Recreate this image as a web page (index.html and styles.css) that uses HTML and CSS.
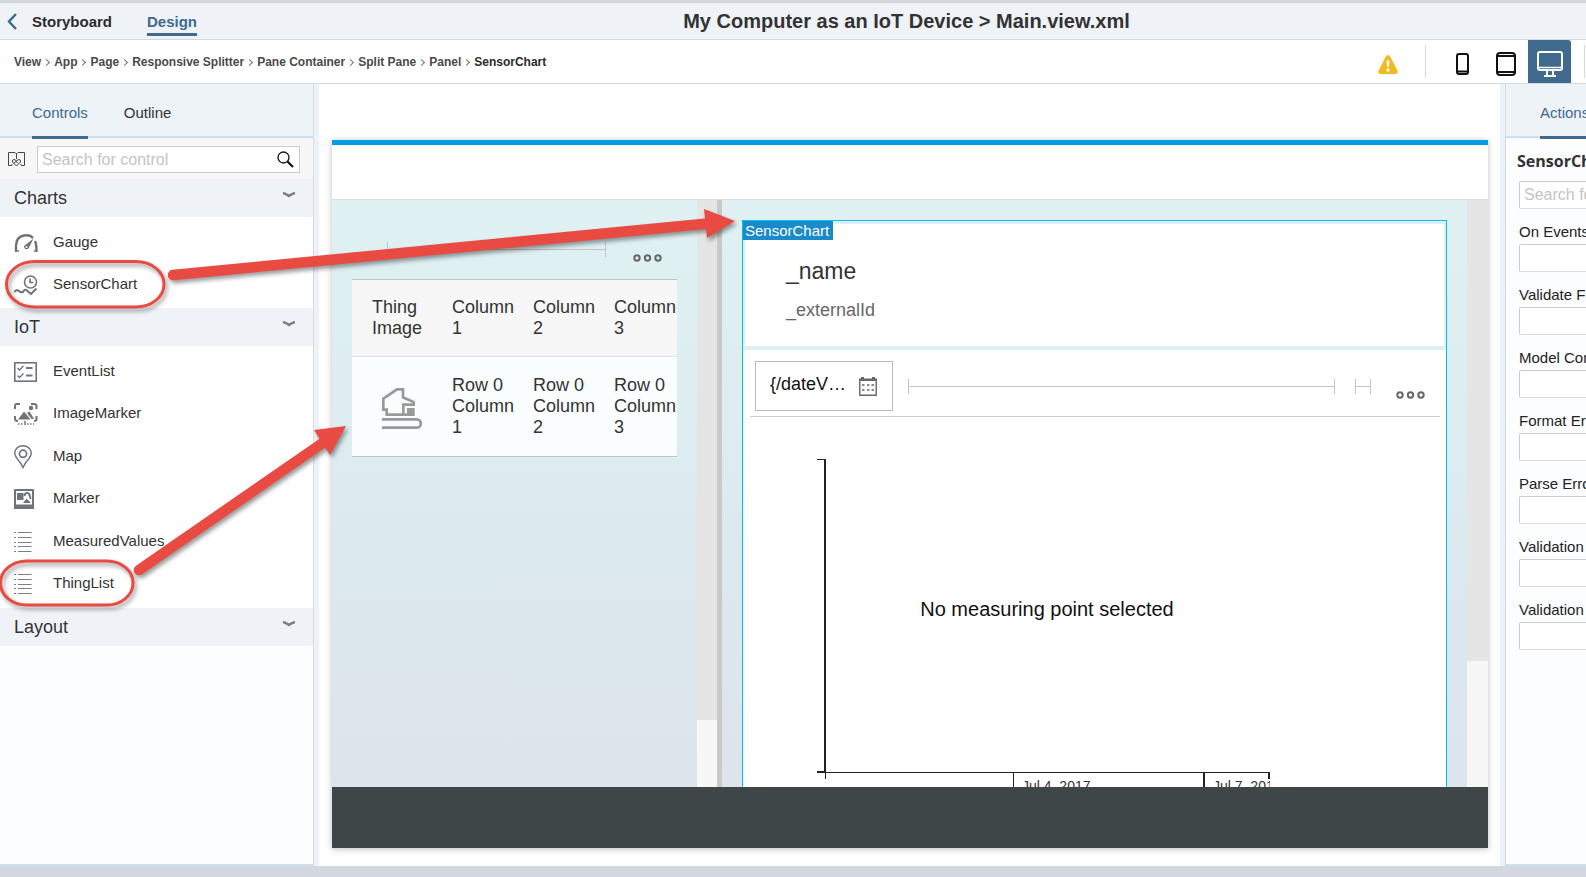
FILE: index.html
```html
<!DOCTYPE html>
<html lang="en">
<head>
<meta charset="utf-8">
<title>My Computer as an IoT Device</title>
<link rel="stylesheet" href="styles.css">
</head>
<body>
<div class="app">
  <header class="topbar">
    <nav class="topnav">
      <a class="back" href="#" aria-label="Back"><svg width="10" height="17" viewBox="0 0 10 17"><path d="M9 1L2 8.500L9 16" fill="none" stroke="#33689a" stroke-width="2.400"/></svg></a>
      <a class="toplink" href="#">Storyboard</a>
      <a class="toplink active" href="#">Design</a>
    </nav>
    <h1 class="title">My Computer as an IoT Device &gt; Main.view.xml</h1>
  </header>

  <div class="toolbar">
    <nav class="crumbs" aria-label="Breadcrumb">
      <a href="#">View</a><a href="#">App</a><a href="#">Page</a><a href="#">Responsive Splitter</a><a href="#">Pane Container</a><a href="#">Split Pane</a><a href="#">Panel</a><a href="#" class="current">SensorChart</a>
    </nav>
    <div class="devices">
      <button class="warn" aria-label="Warnings"><svg width="20" height="19" viewBox="0 0 20 19"><path d="M10 0Q11.500 0 12.500 2L19.500 15.500Q20.500 19 17.500 19H2.500Q-.5 19 .5 15.500L7.500 2Q8.500 0 10 0Z" fill="#f0bb22"/><path d="M8.600 5.500h2.800l-.5 6.500h-1.800z" fill="#fff"/><circle cx="10" cy="15" r="1.700" fill="#fff"/></svg></button>
      <span class="sep"></span>
      <button class="device" aria-label="Phone"><svg width="13" height="22" viewBox="0 0 13 22"><rect x="1" y="1" width="11" height="20" rx="2" fill="none" stroke="#111" stroke-width="2"/><path d="M1 18.500H12" stroke="#111" stroke-width="2"/></svg></button>
      <button class="device" aria-label="Tablet"><svg width="20" height="24" viewBox="0 0 20 24"><rect x="1" y="1" width="18" height="22" rx="3" fill="none" stroke="#111" stroke-width="2"/><path d="M1 4H19M1 20H19" stroke="#111" stroke-width="2"/></svg></button>
      <button class="device selected" aria-label="Desktop"><svg width="26" height="26" viewBox="0 0 26 26"><rect x="1" y="1" width="24" height="18" rx="2" fill="none" stroke="#fff" stroke-width="2"/><path d="M1 16.500H25" stroke="#fff" stroke-width="1.500"/><path d="M10 19.500V24.500M16 19.500V24.500M7 25H19" stroke="#fff" stroke-width="2"/></svg></button>
      <span class="sep"></span>
    </div>
  </div>

  <main class="work">
    <aside class="left">
      <div class="tabs">
        <button class="tab on">Controls</button>
        <button class="tab">Outline</button>
      </div>
      <div class="find">
        <button class="catalog" aria-label="Catalog"><svg width="17" height="15" viewBox="0 0 17 15" fill="none" stroke="#444"><path d="M3 13.500H.5V.5H7L8.500 2L10 .5H16.500V13.500H14M8.500 2V7"/><path d="M8.500 14L4.500 10Q4 7.500 6 7.500T8.500 9.500Q9 7.500 11 7.500T12.500 10Z"/><path d="M6 11L8 9.500L10 11.500M3 14L4.500 12M14 14L12.500 12"/></svg></button>
        <div class="searchbox">
          <input type="text" placeholder="Search for control" aria-label="Search for control">
          <button aria-label="Search"><svg width="17" height="17" viewBox="0 0 17 17"><circle cx="6.500" cy="6.500" r="5.500" fill="none" stroke="#111" stroke-width="1.300"/><path d="M10.500 10.500L16 16" stroke="#111" stroke-width="2.200"/></svg></button>
        </div>
      </div>

      <h2 class="group"><span>Charts</span><svg width="14" height="6" viewBox="0 0 14 6"><path d="M1 1Q4 1.500 7 4Q10 1.500 13 1" fill="none" stroke="#808080" stroke-width="2.400"/></svg></h2>
      <ul class="items">
        <li><svg class="ic" width="24" height="20" viewBox="0 0 24 20"><path d="M2 18.500V13Q2 4 10 2.500Q16 1.500 19 5M21 8Q22.500 11 22.500 18.500" fill="none" stroke="#6e7478" stroke-width="2.400"/><path d="M1 18H5M20 18H23.500" stroke="#6e7478" stroke-width="1.500"/><path d="M19.500 5.500L14.500 15.500Q10.500 18 10 13Z" fill="#6e7478"/><circle cx="12.500" cy="14" r="1" fill="#fff"/></svg><span>Gauge</span></li>
        <li><svg class="ic" width="24" height="20" viewBox="0 0 24 20" fill="none" stroke="#6e7478" stroke-width="1.600"><circle cx="16.500" cy="7" r="6"/><path d="M16 3.500V7.500H19.500"/><path d="M0 17Q3 14 5 16T9 17Q11 13 13.500 16L17 19L22.500 13.500" stroke-width="2"/></svg><span>SensorChart</span></li>
      </ul>

      <h2 class="group"><span>IoT</span><svg width="14" height="6" viewBox="0 0 14 6"><path d="M1 1Q4 1.500 7 4Q10 1.500 13 1" fill="none" stroke="#808080" stroke-width="2.400"/></svg></h2>
      <ul class="items long">
        <li><svg class="ic" width="24" height="20" viewBox="0 0 24 20" fill="none" stroke="#6e7478"><rect x=".8" y=".8" width="21.400" height="18.400" stroke-width="1.600"/><path d="M3.500 6L5.500 8L9.500 4M3.500 13.500L5.500 15.500L9.500 11.500" stroke-width="1.300"/><path d="M12 6H18.500M12 13.500H18.500" stroke-width="2"/></svg><span>EventList</span></li>
        <li><svg class="ic" width="24" height="22" viewBox="0 0 24 22"><path d="M1 6V3Q1 1 3 1H6M17 1H20Q22.500 1 22.500 3V6M1 13V16Q1 18 4 18M22.500 13V16Q22.500 18 20 18" fill="none" stroke="#6e7478" stroke-width="2"/><path d="M4 16.500L10 8.500L16.500 16.500Z" fill="#6e7478"/><path d="M13 10L15.500 8.500L20 16H17.500Z" fill="#6e7478"/><circle cx="17" cy="5" r="2.200" fill="#6e7478"/><path d="M4 21H5.500M7 21H8.500M13 21H14.500M16 21H17.500M19 21H20M11 18V22" stroke="#6e7478" stroke-width="1.500"/></svg><span>ImageMarker</span></li>
        <li><svg class="ic" width="18" height="24" viewBox="0 0 18 24" fill="none" stroke="#6e7478" stroke-width="1.400"><path d="M9 22.500Q7 18 3 13.500Q-.5 9 1.500 5Q4 .8 9 .8T16.500 5Q18.500 9 15 13.500Q11 18 9 22.500Z"/><circle cx="9" cy="8.800" r="3.600" stroke-width="1.700"/></svg><span>Map</span></li>
        <li><svg class="ic" width="20" height="20" viewBox="0 0 20 20"><path d="M0 1Q0 0 1 0H19Q20 0 20 1V20H0ZM2 2V15.500H18V2Z" fill="#6e7478" fill-rule="evenodd"/><path d="M3 4H9.500V11H3ZM9 14L12.500 9.500L17 14Z" fill="#6e7478"/><path d="M10.500 7Q11 3.500 13.500 4T16.500 10" fill="none" stroke="#6e7478" stroke-width="2"/></svg><span>Marker</span></li>
        <li><svg class="ic" width="18" height="20" viewBox="0 0 18 20"><path d="M0 .5H2M0 5.500H2M0 10.500H2M0 14.500H2M0 19.500H2M4 .5H17.500M4 5.500H17.500M4 10.500H17.500M4 14.500H17.500M4 19.500H17.500" stroke="#7b8084"/></svg><span>MeasuredValues</span></li>
        <li><svg class="ic" width="18" height="20" viewBox="0 0 18 20"><path d="M0 .5H2M0 5.500H2M0 10.500H2M0 14.500H2M0 19.500H2M4 .5H17.500M4 5.500H17.500M4 10.500H17.500M4 14.500H17.500M4 19.500H17.500" stroke="#7b8084"/></svg><span>ThingList</span></li>
      </ul>

      <h2 class="group"><span>Layout</span><svg width="14" height="6" viewBox="0 0 14 6"><path d="M1 1Q4 1.500 7 4Q10 1.500 13 1" fill="none" stroke="#808080" stroke-width="2.400"/></svg></h2>
    </aside>

    <section class="canvas">
      <div class="stage">
        <div class="stagehead"></div>
        <div class="split">
          <div class="pane first">
            <div class="content">
              <div class="listbar">
                <span class="range"></span>
                <button class="more" aria-label="More"><svg width="30" height="8" viewBox="0 0 30 8" fill="none" stroke="#666" stroke-width="2"><circle cx="4" cy="4" r="2.700"/><circle cx="14.500" cy="4" r="2.700"/><circle cx="25" cy="4" r="2.700"/></svg></button>
              </div>
              <table class="things">
                <thead><tr><th>Thing Image</th><th>Column 1</th><th>Column 2</th><th>Column 3</th></tr></thead>
                <tbody><tr>
                  <td class="pic"><svg width="41" height="42" viewBox="0 0 123 126" fill="none" stroke="#999" stroke-width="8"><path d="M4 32L45 4H63V28L95 42V50H64V80H14V65H4Z"/><path d="M64 80H98"/><rect x="75" y="60" width="23" height="22" fill="#999" stroke="none"/><path d="M0 94H104A12.500 12.500 0 0 1 104 119H0"/></svg></td>
                  <td>Row 0 Column 1</td><td>Row 0 Column 2</td><td>Row 0 Column 3</td>
                </tr></tbody>
              </table>
            </div>
            <div class="scroll"><span class="track short"></span></div>
          </div>
          <div class="divider"></div>
          <div class="pane second">
            <div class="content wide">
              <article class="sensor">
                <span class="tag">SensorChart</span>
                <header class="thinghead">
                  <h3>_name</h3>
                  <p>_externalId</p>
                </header>
                <div class="chartbar">
                  <button class="date"><span>{/dateV…</span><svg width="18" height="19" viewBox="0 0 18 19"><path d="M.8 2V18.200H17.200V2" fill="none" stroke="#666" stroke-width="1.400"/><path d="M0 1.500H2V0H5V1.500H13V0H16V1.500H18V4H0Z" fill="#666"/><path d="M3 8H5.500M8 8H10.500M12.500 8H15M3 13H5.500M8 13H10.500M12.500 13H15" stroke="#666" stroke-width="1.600"/></svg></button>
                  <span class="range"></span>
                  <span class="range mini"></span>
                  <button class="more" aria-label="More"><svg width="30" height="8" viewBox="0 0 30 8" fill="none" stroke="#666" stroke-width="2"><circle cx="4" cy="4" r="2.700"/><circle cx="14.500" cy="4" r="2.700"/><circle cx="25" cy="4" r="2.700"/></svg></button>
                </div>
                <svg class="chart" width="453" height="340" viewBox="0 0 453 340">
                  <path d="M0 .5H9" stroke="#222"/>
                  <path d="M0 313H9" stroke="#222" stroke-width="2"/>
                  <path d="M8 0V314" stroke="#222" stroke-width="2"/>
                  <path d="M8.500 314V320M8 313.500H453M196.500 313V340" stroke="#222"/>
                  <path d="M387 313V340M452 313V320" stroke="#222" stroke-width="2"/>
                  <text class="msg" x="230" y="157" text-anchor="middle">No measuring point selected</text>
                  <text class="tick" x="205" y="332">Jul 4, 2017</text>
                  <text class="tick" x="396" y="332">Jul 7, 2017</text>
                </svg>
              </article>
            </div>
            <div class="scroll"><span class="track tall"></span></div>
          </div>
        </div>
        <footer class="stagefoot"></footer>
      </div>
    </section>

    <aside class="right">
      <div class="tabs"><button class="tab on">Actions</button></div>
      <form class="props">
        <h2>SensorChart</h2>
        <input class="filter" type="text" placeholder="Search for property" aria-label="Search">
        <label>On Events<input type="text"></label>
        <label>Validate Field<input type="text"></label>
        <label>Model Context<input type="text"></label>
        <label>Format Error<input type="text"></label>
        <label>Parse Error<input type="text"></label>
        <label>Validation Error<input type="text"></label>
        <label>Validation Success<input type="text"></label>
      </form>
    </aside>
  </main>

  <svg class="notes" width="760" height="620" viewBox="0 0 760 620" aria-hidden="true">
    <g fill="none" stroke="#e94b43" stroke-width="3">
      <rect x="6.500" y="261.500" width="157.500" height="45.500" rx="28" ry="22.500"/>
      <rect x=".5" y="561" width="132.500" height="44" rx="26" ry="21.700"/>
    </g>
    <path d="M173 275L708 223.500" stroke="#e94b43" stroke-width="10.500" stroke-linecap="round"/>
    <path d="M704 209L735 221L707 238Z" fill="#e94b43"/>
    <path d="M139 570L324 442" stroke="#e94b43" stroke-width="10.500" stroke-linecap="round"/>
    <path d="M314 430L346 426L330 455Z" fill="#e94b43"/>
  </svg>
</div>
</body>
</html>
```
FILE: styles.css
```css
* { box-sizing: border-box; }

body {
  margin: 0;
  font-family: "Liberation Sans", Arial, sans-serif;
  font-size: 15px;
  color: #333;
  background: #d3d8e0;
}

button {
  border: 0;
  padding: 0;
  background: none;
  font: inherit;
  color: inherit;
}

svg { display: block; }
a { color: inherit; text-decoration: none; }

.app {
  position: relative;
  display: flex;
  flex-direction: column;
  height: 100vh;
  overflow: hidden;
  border-top: 3px solid #d4d8dd;
  border-bottom: 11px solid #d3d8e0;
}

/* Top bar */
.topbar {
  display: grid;
  grid-template-columns: 227px 1fr;
  height: 37px;
  flex: none;
  background: #eff3f8;
  border-bottom: 1px solid #d5d8dc;
}
.topnav { display: flex; align-items: flex-start; padding: 9px 0 0 7px; }
.back { margin: 1px 15px 0 0; }
.toplink { font-weight: 700; line-height: 20px; color: #2b2b2b; }
.toplink + .toplink { margin-left: 35px; }
.toplink.active { color: #406a8e; padding-bottom: 1px; border-bottom: 3px solid #406a8e; }
.title { margin: 0; font-size: 20px; line-height: 36px; text-align: center; }

/* Toolbar */
.toolbar {
  display: flex;
  justify-content: space-between;
  height: 44px;
  flex: none;
  background: #fff;
  border-bottom: 1px solid #d5d8dc;
}
.crumbs { display: flex; padding: 1px 0 0 14px; font-size: 12px; font-weight: 700; color: #4a4a4a; }
.crumbs a { display: flex; align-items: center; }
.crumbs a + a::before {
  content: "";
  width: 4px;
  height: 4px;
  margin: 0 5px 0 3px;
  border: solid #777;
  border-width: 1px 1px 0 0;
  transform: rotate(45deg);
}
.crumbs .current { color: #2b2b2b; }
.devices { display: flex; align-items: center; }
.sep { width: 1px; height: 33px; background: #d5d8dc; }
.warn { margin: 5px 27px 0 0; }
.device { display: flex; align-items: center; justify-content: center; width: 44px; height: 43px; }
.sep + .device { margin-left: 14px; }
.device svg { margin-top: 4px; }
.device.selected { width: 43px; margin-right: 13px; background: #406a8e; border-radius: 0 3px 0 0; }
.devices .sep:last-child { margin-right: 1px; }

/* Work area */
.work { display: flex; flex: 1; min-height: 0; }
.left {
  width: 314px;
  flex: none;
  background: #fcfdfe;
  border-right: 1px solid #d6dbe5;
  border-bottom: 2px solid #cfdfec;
}
.tabs { display: flex; height: 55px; padding-left: 32px; background: #eef3f8; box-shadow: inset 0 -1px #f7f7f7, inset 0 -3px #cddff0; }
.tab { height: 55px; padding-top: 4px; margin-right: 36px; border-bottom: 3px solid transparent; }
.tab.on { color: #406a8e; border-bottom-color: #406a8e; }

.find { display: flex; align-items: flex-start; height: 40px; padding: 7px 13px 0 8px; background: #f7f7f7; }
.catalog { margin: 6px 12px 0 0; }
.searchbox { display: flex; flex: 1; height: 27px; align-items: center; padding-right: 5px; background: #fff; border: 1px solid #ccc; }
.searchbox input { flex: 1; min-width: 0; padding: 1px 4px 0; border: 0; background: none; font: 16px "Liberation Sans", Arial, sans-serif; outline: 0; }
input::placeholder { color: #c4c4c4; opacity: 1; }

.group {
  display: flex;
  align-items: center;
  justify-content: space-between;
  height: 38px;
  margin: 0;
  padding: 0 17px 0 14px;
  background: #eff3f8;
  font-size: 18px;
  font-weight: 400;
}
.group svg { margin-bottom: 6px; }
.items { margin: 0; padding: 3px 0 4px 14px; list-style: none; background: #fff; }
.items.long { display: grid; height: 262px; }
.items li { display: grid; grid-template-columns: 39px 1fr; align-items: center; min-height: 42px; }
.items .ic { margin-top: 3px; }

/* Canvas */
.canvas {
  display: flex;
  flex: 1;
  min-width: 0;
  padding: 56px 12px 18px 13px;
  background: #fefefe;
  border: solid #eef2f8;
  border-width: 0 5px;
}
.stage {
  display: flex;
  flex: 1;
  min-width: 0;
  flex-direction: column;
  border-top: 5px solid #009de0;
  box-shadow: 0 1px 6px rgba(0, 0, 0, .25);
}
.stagehead { height: 55px; flex: none; background: #fff; border-bottom: 1px solid #dcdcdc; }
.split { display: flex; flex: 1; min-height: 0; background: linear-gradient(#dff1f3, #dcebef 50%, #dde4ec); }
.stagefoot { height: 61px; flex: none; background: #3e4648; }
.pane { display: flex; min-width: 0; overflow: hidden; }
.pane.first { flex: 0 0 385px; }
.pane.second { flex: 1; }
.divider { width: 5px; background: #c9c9c9; }
.content { flex: 1; min-width: 0; padding: 42px 20px 0; }
.content.wide { padding: 20px 20px 0; }
.scroll { display: flex; flex-direction: column; width: 20px; background: #f7f7f7; }
.second .scroll { width: 21px; }
.track { background: #e5e5e5; }
.track.short { height: 520px; }
.track.tall { height: 461px; }

.range {
  height: 15px;
  border: solid #c0c5c7;
  border-width: 0 1px;
  background: linear-gradient(#c0c5c7, #c0c5c7) center / 100% 1px no-repeat;
}
.listbar { display: flex; height: 37px; padding: 0 14px 0 35px; }
.listbar .range { flex: 1; margin-right: 27px; }
.listbar .more { align-self: flex-start; margin-top: 12px; }

.things { width: 100%; table-layout: fixed; border-collapse: collapse; border: solid #bfc4c5; border-width: 1px 0; font-size: 18px; line-height: 21px; }
.things th, .things td { padding: 17px 0 16px 18px; font-weight: 400; text-align: left; vertical-align: top; }
.things td { padding-top: 18px; }
.things th:first-child { width: 82px; padding-left: 20px; }
.things thead tr { height: 77px; background: #f7f7f7; border-bottom: 1px solid #dfe2e3; }
.things tbody tr { height: 100px; background: #f9fdfd; }
.things td.pic { padding: 31px 0 0 30px; }

/* Sensor chart card */
.sensor { position: relative; height: 100%; overflow: hidden; background: #fff; border: solid #00bff3; border-width: 1px 1px 0; }
.tag { position: absolute; top: 0; left: 0; padding: 0 4px 0 2px; background: #1b8ac8; color: #fff; line-height: 19px; }
.thinghead { height: 129px; padding: 33px 41px 0; border: solid #dff0f2; border-width: 3px 2px 4px; }
.thinghead h3 { margin: 0; font-size: 23px; font-weight: 400; line-height: 28px; }
.thinghead p { margin: 15px 0 0; font-size: 18px; line-height: 21px; color: #666; }
.chartbar { display: flex; align-items: flex-start; height: 67px; margin: 0 6px 0 7px; padding: 11px 14px 0 5px; border-bottom: 1px solid #ccc; }
.date { display: flex; align-items: center; justify-content: space-between; width: 138px; height: 50px; padding: 0 15px 0 14px; border: 1px solid #bbb; font-size: 18px; color: #111; }
.date span { padding-bottom: 4px; }
.chartbar .range { flex: 1; margin: 18px 20px 0 15px; }
.chartbar .range.mini { flex: none; width: 16px; margin: 18px 25px 0 0; }
.chartbar .more { margin-top: 30px; }
.chart { margin: 42px 0 0 74px; overflow: hidden; }
.msg { font-size: 20px; fill: #111; }
.tick { font-size: 14px; fill: #333; }

/* Property panel */
.right { width: 81px; flex: none; overflow: hidden; background: #fcfdfe; border-left: 1px solid #d3d8e3; border-bottom: 2px solid #cfdfec; }
.right .tabs { width: 300px; padding-left: 34px; }
.props { width: 300px; padding: 10px 13px; color: #222; }
.props h2 { margin: 0 0 7px -2px; font: 700 16px/25px "Open Sans", sans-serif; color: #333; }
.props input { display: block; width: 100%; height: 28px; padding: 0 4px; background: #fff; border: 1px solid #ccc; border-bottom-color: #ddd; border-radius: 2px; font: 16px "Liberation Sans", Arial, sans-serif; }
.props label { display: block; margin-top: 12px; line-height: 21px; }
.props label input { margin-top: 2px; }

/* Annotation marks over the page */
.notes { position: absolute; top: -3px; left: 0; pointer-events: none; filter: drop-shadow(2px 3px 2px rgba(0, 0, 0, .4)); }
```
